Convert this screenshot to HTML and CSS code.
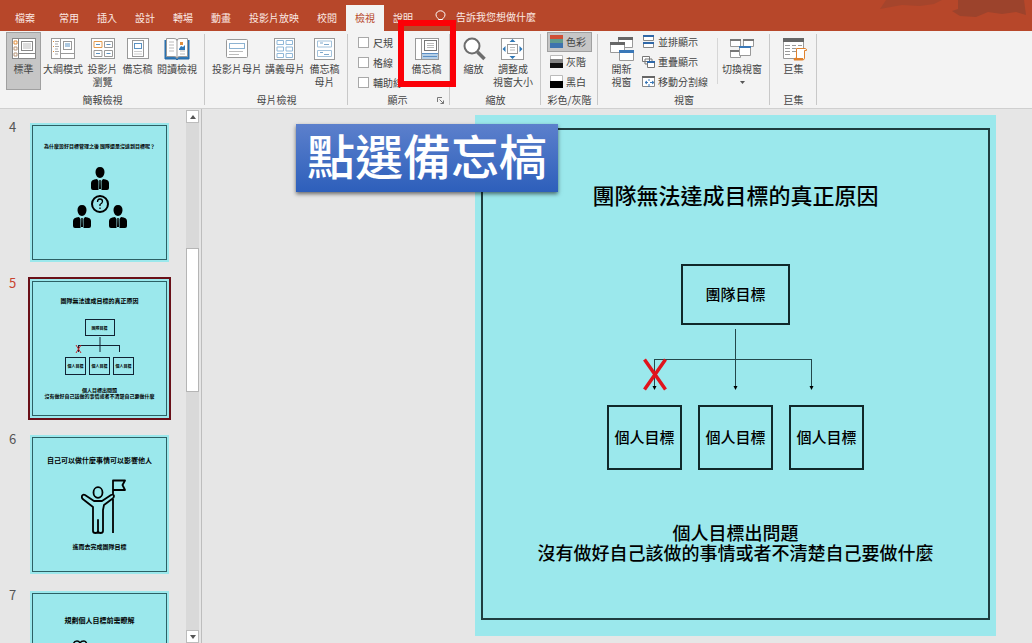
FILE: index.html
```
<!DOCTYPE html>
<html lang="zh-Hant">
<head>
<meta charset="utf-8">
<title>簡報檢視</title>
<link rel="stylesheet" href="styles.css">
</head>
<body>
<div class="app">
  <header class="tabbar">
    <svg class="brush" width="152" height="18" viewBox="0 0 152 18" aria-hidden="true"><path d="M0 9 6 0H62L54 4 40 6 22 5Z" fill="#a5452c"/><path d="M78 0H144L146 15 136 12 122 14 108 12 96 17 80 16 72 11 78 9Z" fill="#9c432c"/></svg>
    <nav class="tabs">
      <button class="tab tab-file">檔案</button>
      <button class="tab">常用</button>
      <button class="tab">插入</button>
      <button class="tab">設計</button>
      <button class="tab">轉場</button>
      <button class="tab">動畫</button>
      <button class="tab">投影片放映</button>
      <button class="tab">校閱</button>
      <button class="tab tab-active">檢視</button>
      <button class="tab">說明</button>
    </nav>
    <button class="tell-me">
      <svg width="11" height="14" viewBox="0 0 11 14" fill="none" stroke="#fff"><path d="M3.500 9.500C3.500 8 1 7.500 1 4.800a4.500 4 0 0 1 9 0C10 7.500 7.500 8 7.500 9.500ZM4 11.500h3M4.500 13h2"/></svg>
      告訴我您想做什麼
    </button>
  </header>

  <div class="ribbon">
    <section class="group">
      <div class="tools">
        <button class="big small-w pressed">
          <svg class="icon" viewBox="0 0 26 24" fill="#fff" stroke="#888"><rect x="1.500" y="1.500" width="23" height="20"/><path d="M7.500 2v19M8 16.500h16"/><path d="M3 4h3v3H3z" stroke="#e08e3c"/><path d="M3 10h3v3H3zM3 16h3v3H3z" stroke="#b8977a"/><rect x="10.500" y="4.500" width="11" height="9"/><path d="M12 7h8M12 9h8M12 11h8" stroke="#bbb"/></svg>
          <span>標準</span>
        </button>
        <button class="big mid-w">
          <svg class="icon" viewBox="0 0 26 24" fill="#fff" stroke="#999"><rect x="1.500" y="1.500" width="23" height="20"/><path d="M10.500 2v19M11 16.500h13"/><path d="M3 4.500h1M3 9.500h1M3 14.500h1" stroke="#e08e3c"/><path d="M5 4.500h4M5 7h3M5 9.500h4M5 12h3M5 14.500h4M5 17h3" stroke="#aaa"/><rect x="13.500" y="4.500" width="8" height="8"/><path d="M15 7h5M15 9h5" stroke="#5b92c2"/></svg>
          <span>大綱模式</span>
        </button>
        <button class="big small-w">
          <svg class="icon" viewBox="0 0 26 24" fill="#fff" stroke="#999"><rect x="1.500" y="1.500" width="23" height="20"/><path d="M4 4.500h8v6H4z" stroke="#e39a4c"/><path d="M14.500 4.500h8v6h-8zM4 13.500h8v6H4zM14.500 13.500h8v6h-8z"/><path d="M6 7.500h4M16.500 7.500h4M6 16.500h4M16.500 16.500h4" stroke="#5b92c2"/></svg>
          <span>投影片<br>瀏覽</span>
        </button>
        <button class="big small-w">
          <svg class="icon" viewBox="0 0 26 24" fill="#fff" stroke="#999"><rect x="2.500" y="1.500" width="21" height="20"/><rect x="7.500" y="3.500" width="11" height="16"/><rect x="9.500" y="6.500" width="7" height="5" stroke="#5b92c2"/><path d="M9 14.500h8M9 17h8" stroke="#ccc"/></svg>
          <span>備忘稿</span>
        </button>
        <button class="big mid-w">
          <svg class="icon" viewBox="0 0 26 24" fill="#fff" stroke="#999"><path d="M1 3v19h11l1 1 1-1h11V3" fill="#2f78b7" stroke="#2468a6"/><path d="M2.500 1.500H10q3 0 3 2 0-2 3-2h7.500v18H16q-3 0-3 2 0-2-3-2H2.500zM13 3v18"/><path d="M5 5h5M5 8h5M5 11h5M5 14h5M16 14h5M16 17h5" stroke="#bbb"/><path d="M16 5h3v3h-3z" fill="#e08e3c" stroke="none"/><path d="M15 12l2-3 2 1 2-2v5h-6z" fill="#2f78b7" stroke="none"/></svg>
          <span>閱讀檢視</span>
        </button>
      </div>
      <h2 class="caption">簡報檢視</h2>
    </section>

    <section class="group">
      <div class="tools">
        <button class="big large-w">
          <svg class="icon" viewBox="0 0 26 24" fill="#fff" stroke="#999"><rect x="2.500" y="2.500" width="21" height="18" rx="1"/><rect x="5.500" y="6.500" width="15" height="5" stroke="#8db3d2"/><path d="M5 14.500h14M5 17.500h10" stroke="#bbb"/></svg>
          <span>投影片母片</span>
        </button>
        <button class="big mid-w">
          <svg class="icon" viewBox="0 0 26 24" fill="#fff" stroke="#999"><rect x="2.500" y="1.500" width="20" height="21"/><path d="M5 3.500h6.500v4H5zM14 3.500h6.500v4H14zM5 10h6.500v4H5zM14 10h6.500v4H14zM5 16.500h6.500v4H5zM14 16.500h6.500v4H14z" stroke="#90b8d8"/></svg>
          <span>講義母片</span>
        </button>
        <button class="big small-w">
          <svg class="icon" viewBox="0 0 26 24" fill="#fff" stroke="#999"><rect x="2.500" y="1.500" width="20" height="21"/><path d="M5.500 4h14v6h-14zM5.500 13.500h14v6h-14z" stroke="#a3c2db"/><path d="M8 6h3M12 7.500h5M8 15.500h3M12 17.500h5" stroke="#7fa9cc"/></svg>
          <span>備忘稿<br>母片</span>
        </button>
      </div>
      <h2 class="caption">母片檢視</h2>
    </section>

    <section class="group group-show">
      <div class="tools">
        <div class="checks">
          <label class="check"><input type="checkbox">尺規</label>
          <label class="check"><input type="checkbox">格線</label>
          <label class="check"><input type="checkbox">輔助線</label>
        </div>
        <div class="marked">
          <button class="big small-w">
            <svg class="icon" viewBox="0 0 26 24" fill="#fff" stroke="#999"><rect x="1.500" y="1.500" width="23" height="21"/><path d="M7.500 2v20"/><rect x="10.500" y="3.500" width="12" height="10" stroke="#777"/><path d="M13 6.500h7M13 8.500h7M13 10.500h7" stroke="#bbb"/><path d="M8 16h16v6H8z" fill="#b5cfe6" stroke="none"/><path d="M8 16.500h16M9 19.500h14" stroke="#5b8fc4"/></svg>
            <span>備忘稿</span>
          </button>
          <div class="highlight"></div>
        </div>
      </div>
      <div class="caption-row">
        <h2 class="caption">顯示</h2>
        <button class="launcher" aria-label="格線設定"><svg width="7" height="7" viewBox="0 0 7 7" fill="none" stroke="#777"><path d="M.5 5V.5H5M2.500 2.500l4 4M6.500 3.500v3h-3"/></svg></button>
      </div>
    </section>

    <section class="group">
      <div class="tools">
        <button class="big small-w">
          <svg class="icon" viewBox="0 0 26 24" fill="none"><circle cx="11" cy="9" r="7.500" fill="#fff" stroke="#6d6d6d" stroke-width="2"/><path d="m16.500 15 7 7" stroke="#6d6d6d" stroke-width="3.500"/></svg>
          <span>縮放</span>
        </button>
        <button class="big mid-w">
          <svg class="icon" viewBox="0 0 26 24" fill="#fff" stroke="#999"><rect x="1.500" y="1.500" width="22" height="21"/><rect x="7.500" y="7.500" width="10" height="9"/><path d="M10 10.500h5M10 13h5" stroke="#bbb"/><path d="m12.500 2 3 3h-6zM12.500 22l3-3h-6zM2.500 12l3-3v6zM22.500 12l-3-3v6z" fill="#2f78b7" stroke="none"/></svg>
          <span>調整成<br>視窗大小</span>
        </button>
      </div>
      <h2 class="caption">縮放</h2>
    </section>

    <section class="group">
      <div class="tools">
        <div class="stack">
          <button class="row-btn pressed"><svg width="13" height="13" viewBox="0 0 13 13"><path d="M0 0h13v5H0z" fill="#cf4f35"/><path d="M0 4h13v5H0z" fill="#5f9a8d"/><path d="M0 8h13v5H0z" fill="#3d73ae"/></svg>色彩</button>
          <button class="row-btn"><svg width="13" height="13" viewBox="0 0 13 13"><path d="M.5.500h12v4H.5z" fill="#fff" stroke="#bbb"/><path d="M0 4h13v5H0z" fill="#858585"/><path d="M0 8h13v5H0z" fill="#111"/></svg>灰階</button>
          <button class="row-btn"><svg width="13" height="13" viewBox="0 0 13 13"><path d="M.5.500h12v6H.5z" fill="#fff" stroke="#bbb"/><path d="M0 6h13v7H0z" fill="#000"/></svg>黑白</button>
        </div>
      </div>
      <h2 class="caption">彩色/灰階</h2>
    </section>

    <section class="group">
      <div class="tools">
        <button class="big small-w">
          <svg class="icon" viewBox="0 0 26 24" fill="#fff" stroke="#999"><path d="M9.500.500h14v10h-14z"/><path d="M9 0h15v3H9z" fill="#666" stroke="none"/><path d="M1.500 5.500h14v10h-14z"/><path d="M1 5h15v3H1z" fill="#666" stroke="none"/><path d="M10.500 13.500h14v10h-14z"/><path d="M10 13h15v3H10z" fill="#3a78b8" stroke="none"/></svg>
          <span>開新<br>視窗</span>
        </button>
        <div class="stack stack-window">
          <button class="row-btn"><svg width="13" height="13" viewBox="0 0 13 13" fill="#fff" stroke="#888"><path d="M1.500.500h10v5h-10zM1.500 7.500h10v5h-10z"/><path d="M1 1h11M1 8h11" stroke="#2f68a8" stroke-width="2"/></svg>並排顯示</button>
          <button class="row-btn"><svg width="13" height="13" viewBox="0 0 13 13" fill="#fff" stroke="#777"><path d="M.5 1.500h7v5h-7zM3 4h7v5H3z"/><path d="M5.500 6.500h7v6h-7z"/><path d="M5 7h8" stroke="#2f68a8" stroke-width="2"/></svg>重疊顯示</button>
          <button class="row-btn"><svg width="13" height="13" viewBox="0 0 13 13" fill="#fff" stroke="#888"><path d="M.5 1.500h12v10H.5z"/><path d="M0 2h13" stroke="#666" stroke-width="2"/><path d="M7 4v2M7 9v3M3 7.500h3M8 7.500h4M5 6l-2 1.500L5 9M10 6l2 1.500L10 9" stroke="#3a78b8" fill="none"/></svg>移動分割線</button>
        </div>
        <div class="switcher">
          <button class="big mid-w">
            <svg class="icon" viewBox="0 0 26 24" fill="#fff" stroke="#999"><path d="M1.500 2.500h10v7h-10zM14.500 2.500h10v7h-10zM1.500 13.500h10v7h-10z"/><path d="M1 3h11M14 3h11M1 14h11" stroke="#777" stroke-width="2"/><path d="M10.500 9.500h11v9h-11z"/><path d="M10 10h12" stroke="#3a78b8" stroke-width="2"/></svg>
            <span>切換視窗</span>
            <svg class="caret" width="5" height="3" viewBox="0 0 5 3"><path d="M0 0h5L2.500 3z" fill="#555"/></svg>
          </button>
        </div>
      </div>
      <h2 class="caption">視窗</h2>
    </section>

    <section class="group">
      <div class="tools">
        <button class="big small-w">
          <svg class="icon" viewBox="0 0 26 24" fill="#fff" stroke="#999"><path d="M2.500 2.500h20v19h-20z"/><path d="M2 1h21v4H2z" fill="#666" stroke="none"/><path d="M4 8.500h5M11 8.500h4M17 8.500h4M4 11.500h5M11 11.500h4M4 14.500h5M11 14.500h4M4 17.500h5"/><path d="M15.500 21V11.500h9q1 0 1 2h-2V21q0 2-2 2H13q0-2 2.500-2Z" stroke="#e0812c"/><path d="M13 21h9v2h-9z" fill="#e0812c" stroke="none"/></svg>
          <span>巨集</span>
        </button>
      </div>
      <h2 class="caption">巨集</h2>
    </section>
  </div>

  <div class="workspace">
    <aside class="thumbs">
      <div class="thumb-item">
        <span class="num">4</span>
        <div class="thumb"><div class="thumb-frame">
          <p class="t5 t-first">為什麼設好目標管理之後 團隊還是沒達到目標呢？</p>
          <svg class="people" width="56" height="64" viewBox="0 0 56 64" aria-hidden="true">
            <defs><g id="man"><path d="M9 0c3 0 4.500 2 4.500 5S11.500 11 9 11 4.500 8 4.500 5 6 0 9 0ZM6 12 7.500 14V23H2q-2 0-2-2v-5q0-3.500 6-4ZM12 12 10.500 14V23H16q2 0 2-2v-5q0-3.500-6-4ZM8.300 13h1.400l.3 9h-2z"/></g></defs>
            <use href="#man" x="19" y="0"/><use href="#man" x="1" y="38"/><use href="#man" x="37" y="38"/>
            <circle cx="28" cy="37" r="8" fill="none" stroke="#000" stroke-width="2"/><path d="M25.500 35q0-3 2.500-3t2.500 2.500q0 1.500-2.500 3v1.500M28 40.500V42" fill="none" stroke="#000" stroke-width="1.300"/>
          </svg>
        </div></div>
      </div>
      <div class="thumb-item selected">
        <span class="num">5</span>
        <div class="thumb"><div class="thumb-frame">
          <p class="t6 t-title">團隊無法達成目標的真正原因</p>
          <div class="mini-box mini-team">團隊目標</div>
          <svg width="70" height="21" viewBox="0 0 70 21" fill="none" stroke="#123"><path d="M35 1v15M13 9.500h42M13.500 9v7M54.500 9v7"/><path d="m11 9 5 8M16 9l-5 8" stroke="#c5252a"/></svg>
          <div class="mini-row"><div class="mini-box">個人目標</div><div class="mini-box">個人目標</div><div class="mini-box">個人目標</div></div>
          <p class="t5 t-foot">個人目標出問題<br>沒有做好自己該做的事情或者不清楚自己要做什麼</p>
        </div></div>
      </div>
      <div class="thumb-item">
        <span class="num">6</span>
        <div class="thumb"><div class="thumb-frame">
          <p class="t7 t-help">自己可以做什麼事情可以影響他人</p>
          <svg class="hero" width="46" height="56" viewBox="0 0 46 56" fill="none" stroke="#000" stroke-width="1.800" stroke-linejoin="round" aria-hidden="true"><ellipse cx="17" cy="13.500" rx="4.500" ry="5.300"/><path d="M1 17q1-2 3-1l9 6h8l9-6q3-1 3 1 0 2-2 3l-8 6-1 5v21q0 2-2.500 2T17 52V41v11q0 2-2.500 2T12 52V28L3 21q-3-2-2-4ZM32 15V1.500h12L41.500 6l2.500 5H32M32 20v34"/></svg>
          <p class="t6 t-six">進而去完成團隊目標</p>
        </div></div>
      </div>
      <div class="thumb-item">
        <span class="num">7</span>
        <div class="thumb"><div class="thumb-frame">
          <p class="t7 t-seven">規劃個人目標前需瞭解</p>
          <svg class="knot" width="16" height="12" viewBox="0 0 16 12" fill="none" stroke="#000" stroke-width="1.500"><path d="M1 8q0-6 4-6 2 0 3 2 1-2 4-2 3 0 3 6"/></svg>
        </div></div>
      </div>
    </aside>
    <div class="scrollbar">
      <button class="scroll-btn" aria-label="向上捲動"><svg width="6" height="4" viewBox="0 0 6 4"><path d="M0 4h6L3 0z" fill="#555"/></svg></button>
      <div class="track"><div class="handle"></div></div>
      <button class="scroll-btn" aria-label="向下捲動"><svg width="6" height="4" viewBox="0 0 6 4"><path d="M0 0h6L3 4z" fill="#555"/></svg></button>
    </div>
    <main class="canvas">
      <article class="slide">
        <div class="frame">
          <h1 class="slide-title">團隊無法達成目標的真正原因</h1>
          <div class="node node-team">團隊目標</div>
          <svg width="257" height="80" viewBox="0 0 257 80" fill="none" aria-hidden="true"><path d="M128.500 4v59M48 34.500h156M47.500 34v29M204.500 34v29" stroke="#23474b"/><path d="M45.500 61h4l-2 4zM126.500 61h4l-2 4zM202.500 61h4l-2 4z" fill="#000"/><path d="m37.500 34.500 21 30M58.500 34.500l-21 30" stroke="#e0141b" stroke-width="3.500"/></svg>
          <div class="node-row"><div class="node">個人目標</div><div class="node">個人目標</div><div class="node">個人目標</div></div>
          <p class="slide-foot">個人目標出問題<br>沒有做好自己該做的事情或者不清楚自己要做什麼</p>
        </div>
      </article>
    </main>
    <div class="callout">點選備忘槁</div>
  </div>
</div>
</body>
</html>
```
FILE: styles.css
```
* { box-sizing: border-box; }
body {
  margin: 0;
  font-family: "Noto Sans CJK TC", "Noto Sans", sans-serif;
  font-size: 10px;
  color: #444;
  background: #e6e6e6;
}
h1, h2, p { margin: 0; font-weight: inherit; }
button {
  margin: 0;
  padding: 0;
  border: 0;
  background: none;
  font: inherit;
  color: inherit;
}
svg { display: block; flex: none; }
.app { display: flex; flex-direction: column; height: 100vh; overflow: hidden; }

/* tab bar */
.tabbar {
  position: relative;
  display: flex;
  align-items: flex-end;
  height: 31px;
  flex: none;
  background: #b7472a;
  color: #fbe9e3;
}
.brush { position: absolute; top: 0; right: 0; }
.tabs { display: flex; }
.tab { height: 26px; padding: 0 9px; line-height: 24px; white-space: nowrap; }
.tab-file { padding: 0 15px; }
.tab-active { background: #f3f3f3; color: #b7472a; }
.tell-me { display: flex; align-items: center; gap: 10px; height: 26px; margin-left: 13px; padding-bottom: 3px; white-space: nowrap; }

/* ribbon */
.ribbon { display: flex; flex: none; height: 78px; background: #f3f3f3; border-bottom: 1px solid #cfcfcf; }
.group { position: relative; display: flex; flex-direction: column; padding: 1px 6px 0; }
.group::after { content: ""; position: absolute; right: 0; top: 3px; bottom: 3px; width: 1px; background: #c8c8c8; }
.tools { display: flex; height: 60px; }
.caption { font-size: 10px; line-height: 16px; text-align: center; white-space: nowrap; }
.big {
  display: flex;
  flex-direction: column;
  align-items: center;
  height: 58px;
  padding-top: 5px;
  line-height: 13px;
  white-space: nowrap;
}
.small-w { width: 35px; }
.mid-w { width: 44px; }
.large-w { width: 52px; }
.icon { width: 26px; height: 24px; margin-bottom: 1px; }
.pressed { background: #c6c6c6; outline: 1px solid #a0a0a0; outline-offset: -1px; }
.caret { margin-top: 6px; }
.group-show { padding-left: 10px; }
.checks { display: flex; flex-direction: column; width: 51px; }
.check { display: flex; align-items: center; gap: 4px; height: 20px; white-space: nowrap; }
.check input {
  appearance: none;
  width: 11px;
  height: 11px;
  margin: 0;
  flex: none;
  background: #fff;
  border: 1px solid #a8a8a8;
}
.marked { position: relative; }
.highlight { position: absolute; left: -11px; top: -12px; width: 58px; height: 67px; border: 6px solid #fb0007; z-index: 2; }
.marked::before { content: ""; position: absolute; inset: 0 0 0 -8px; background: #f3f3f3; }
.marked .big { position: relative; }
.caption-row { display: flex; align-items: center; }
.caption-row .caption { flex: 1; }
.stack { display: flex; flex-direction: column; }
.row-btn { display: flex; align-items: center; gap: 3px; height: 20px; padding: 0 6px 1px 3px; white-space: nowrap; }
.stack-window { margin-right: 3px; }
.switcher { position: relative; padding-left: 3px; }
.switcher::before { content: ""; position: absolute; left: 0; top: 6px; height: 46px; width: 1px; background: #d6d6d6; }

/* workspace */
.workspace { position: relative; display: flex; flex: 1; min-height: 0; }
.thumbs { display: flex; flex-direction: column; gap: 13px; width: 186px; padding-top: 12px; overflow: hidden; flex: none; }
.thumb-item { display: flex; flex: none; }
.num { width: 28px; padding-left: 9px; font-size: 13px; line-height: 12px; color: #555; }
.thumb { width: 143px; height: 143px; border: 2px solid #e6e6e6; background: #9be8ec; padding: 2px; color: #000; font-weight: 700; }
.thumb-frame {
  display: flex;
  flex-direction: column;
  align-items: center;
  height: 100%;
  border: 1px solid #2c6064;
  text-align: center;
  white-space: nowrap;
  overflow: hidden;
}
.selected .num { color: #c8432f; }
.selected .thumb { border-color: #6a1018; }
.t5 { font-size: 5px; line-height: 6px; }
.t6 { font-size: 6px; line-height: 10px; }
.t7 { font-size: 7px; line-height: 10px; }
.t-first { margin-top: 17px; }
.people { margin-top: 18px; }
.t-title { margin-top: 14px; margin-bottom: 13px; }
.t-help { margin-top: 17px; margin-bottom: 14px; }
.hero { margin-left: 8px; }
.mini-box { width: 21px; height: 18px; border: 1px solid #123; font-size: 4px; line-height: 16px; }
.mini-team { width: 30px; height: 17px; }
.mini-row { display: flex; gap: 3px; }
.t-foot { margin-top: 12px; }
.t-six { margin-top: 7px; }
.t-seven { margin-top: 21px; }
.knot { margin: 14px 40px 0 0; }

.scrollbar { display: flex; flex-direction: column; width: 13px; flex: none; padding-top: 1px; }
.scroll-btn { display: flex; align-items: center; justify-content: center; height: 13px; background: #fff; border: 1px solid #bcbcbc; flex: none; }
.track { flex: 1; padding-top: 125px; background: #d9d9d9; }
.handle { height: 144px; background: #fff; border: 1px solid #b5b5b5; }

.canvas { display: flex; flex: 1; justify-content: flex-end; margin-left: 2px; padding: 6px 36px 7px 0; border-left: 1px solid #bdbdbd; min-width: 0; }
.slide { height: 100%; aspect-ratio: 1; padding: 13px 6px 16px; background: #9be8ec; color: #000; font-weight: 500; }
.frame { display: flex; flex-direction: column; align-items: center; height: 100%; border: 2px solid #1f3d40; white-space: nowrap; }
.slide-title { margin: 49px 0 55px; font-size: 22px; line-height: 30px; }
.node { display: flex; align-items: center; justify-content: center; width: 75px; height: 65px; padding-bottom: 3px; border: 2px solid #10282a; font-size: 15px; }
.node-team { width: 109px; height: 61px; }
.node-row { display: flex; gap: 16px; }
.slide-foot { margin-top: 52px; font-size: 18px; line-height: 20px; text-align: center; }

.callout {
  position: absolute;
  left: 296px;
  top: 15px;
  width: 262px;
  height: 68px;
  background: linear-gradient(#5c80cc, #2d5fbb);
  box-shadow: 0 2px 4px rgba(0, 0, 0, 0.55);
  color: #fff;
  font-size: 48px;
  font-weight: 500;
  line-height: 60px;
  text-align: center;
}
```
